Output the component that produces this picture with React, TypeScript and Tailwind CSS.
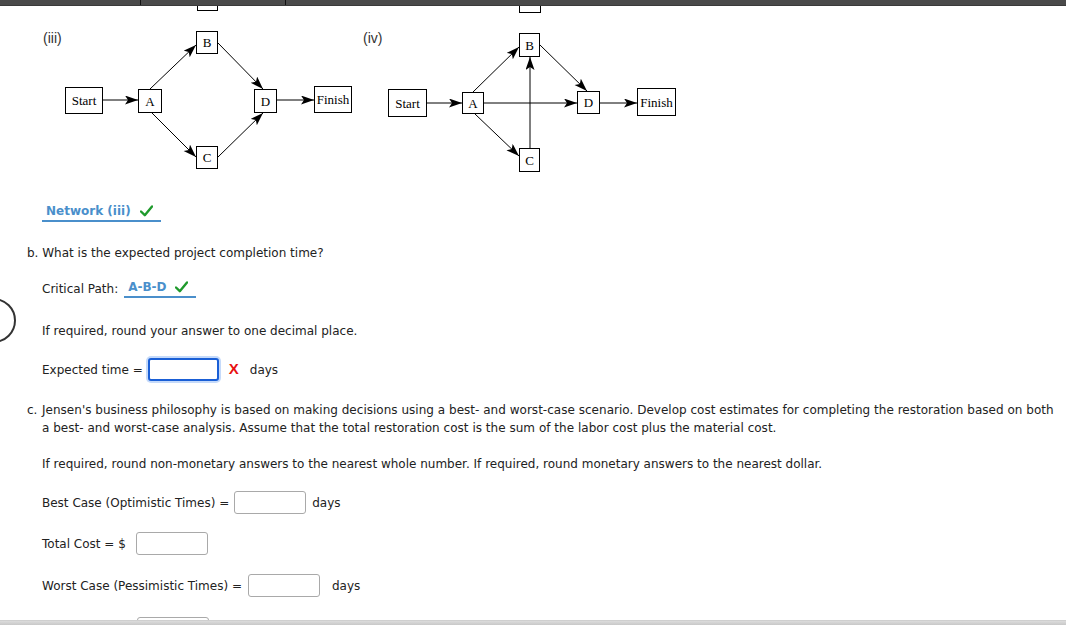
import React from "react";

const font = { fontFamily: '"DejaVu Sans", Verdana, sans-serif' };
const serif = { fontFamily: '"Liberation Serif", "Times New Roman", serif' };
const sans = { fontFamily: '"Liberation Sans", Arial, sans-serif' };

function Check() {
  return (
    <svg width="13" height="12" viewBox="0 0 13 12" className="inline-block">
      <path d="M1 6.5 L4.8 10.2 L12 1.5" fill="none" stroke="#1f9a2c" strokeWidth="2.4" strokeLinecap="round" strokeLinejoin="round" />
    </svg>
  );
}

function Box({ x1, y1, x2, y2, label }: { x1: number; y1: number; x2: number; y2: number; label?: string }) {
  return (
    <g>
      <rect x={x1 + 0.5} y={y1 + 0.5} width={x2 - x1 - 1} height={y2 - y1 - 1} fill="white" stroke="black" strokeWidth="1" />
      {label && (
        <text x={(x1 + x2) / 2} y={(y1 + y2) / 2 + 4.5} textAnchor="middle" fill="black" style={{ ...serif, fontSize: 13 }}>
          {label}
        </text>
      )}
    </g>
  );
}

function Arrow({ x1, y1, x2, y2, id }: { x1: number; y1: number; x2: number; y2: number; id: string }) {
  return <line x1={x1} y1={y1} x2={x2} y2={y2} stroke="black" strokeWidth="1" markerEnd={`url(#${id})`} />;
}

function Head({ id }: { id: string }) {
  return (
    <defs>
      <marker id={id} markerWidth="14" markerHeight="10" refX="13" refY="4.5" orient="auto" markerUnits="userSpaceOnUse">
        <path d="M0,0 L13,4.5 L0,9 L3,4.5 z" fill="black" />
      </marker>
    </defs>
  );
}

function NetworkThree() {
  return (
    <svg width="360" height="184" viewBox="0 6 360 184" className="block shrink-0">
      <Head id="h3" />
      <text x="43" y="43" fill="#333" style={{ ...sans, fontSize: 14 }}>(iii)</text>
      <Box x1={197} y1={-10} x2={218} y2={11} />
      <Arrow x1={103} y1={100} x2={138} y2={100} id="h3" />
      <Arrow x1={150} y1={89} x2={196} y2={45} id="h3" />
      <Arrow x1={218} y1={43} x2={263} y2={89} id="h3" />
      <Arrow x1={152} y1={113} x2={196} y2={157} id="h3" />
      <Arrow x1={218} y1={157} x2={263} y2={113} id="h3" />
      <Arrow x1={277} y1={100} x2={314} y2={100} id="h3" />
      <Box x1={65} y1={87} x2={103} y2={114} label="Start" />
      <Box x1={138} y1={89} x2={162} y2={113} label="A" />
      <Box x1={196} y1={31} x2={218} y2={54} label="B" />
      <Box x1={196} y1={146} x2={218} y2={169} label="C" />
      <Box x1={254} y1={89} x2={277} y2={113} label="D" />
      <Box x1={314} y1={86} x2={352} y2={113} label="Finish" />
    </svg>
  );
}

function NetworkFour() {
  return (
    <svg width="330" height="184" viewBox="360 6 330 184" className="block shrink-0">
      <Head id="h4" />
      <text x="363" y="43" fill="#333" style={{ ...sans, fontSize: 14 }}>(iv)</text>
      <Box x1={519} y1={-10} x2={541} y2={13} />
      <Arrow x1={427} y1={103} x2={462} y2={103} id="h4" />
      <Arrow x1={473} y1={92} x2={519} y2={47} id="h4" />
      <Arrow x1={540} y1={45} x2={587} y2={91} id="h4" />
      <Arrow x1={484} y1={103} x2={577} y2={103} id="h4" />
      <Arrow x1={475} y1={114} x2={519} y2={156} id="h4" />
      <Arrow x1={530} y1={148} x2={530} y2={57} id="h4" />
      <Arrow x1={600} y1={103} x2={637} y2={103} id="h4" />
      <Box x1={388} y1={89} x2={427} y2={117} label="Start" />
      <Box x1={462} y1={92} x2={484} y2={114} label="A" />
      <Box x1={519} y1={33} x2={540} y2={57} label="B" />
      <Box x1={519} y1={148} x2={540} y2={172} label="C" />
      <Box x1={577} y1={91} x2={600} y2={114} label="D" />
      <Box x1={637} y1={88} x2={676} y2={116} label="Finish" />
    </svg>
  );
}

function Field() {
  return <div className="w-[72px] h-[23px] border border-[#a9a9a9] rounded-[3px] bg-white shrink-0" />;
}

export default function App() {
  return (
    <div className="relative w-[1066px] h-[625px] overflow-hidden bg-white text-[12px] text-[#222]" style={font}>
      {/* top frame bar */}
      <div className="flex h-[6px] bg-[#4a4a4a] border-b border-[#3a3a3a]">
        <div className="w-[141px] border-r border-[#111]" />
        <div className="w-[145px] border-r border-[#111]" />
      </div>

      <div className="flex">
        <NetworkThree />
        <NetworkFour />
      </div>

      <div className="flex flex-col">
        <div className="ml-[42px] mt-[13px] self-start flex items-center gap-[9px] pl-[4px] pr-[8px] pb-[1px] border-b-2 border-[#4a8fcb] leading-[16px]">
          <span className="font-bold text-[#4a8fcb]">Network (iii)</span>
          <Check />
        </div>

        <div className="ml-[27px] mt-[23px] leading-[16px]">b. What is the expected project completion time?</div>

        <div className="ml-[42px] mt-[18px] flex items-center leading-[16px]">
          <span>Critical Path:</span>
          <div className="ml-[6px] flex items-center gap-[8px] pl-[4px] pr-[8px] pb-[1px] border-b-2 border-[#4a8fcb]">
            <span className="font-bold text-[#4a8fcb]">A-B-D</span>
            <Check />
          </div>
        </div>

        <div className="ml-[42px] mt-[25px] leading-[16px]">If required, round your answer to one decimal place.</div>

        <div className="ml-[42px] mt-[19px] flex items-center h-[23px]">
          <span>Expected time =</span>
          <div className="ml-[5px] w-[71px] h-[23px] rounded-[3px] border-2 border-[#1a5fd6] shadow-[0_0_0_2px_rgba(90,150,240,0.35)] bg-white" />
          <span className="ml-[10px] font-bold text-[15px] text-[#e81010]" style={sans}>X</span>
          <span className="ml-[11px]">days</span>
        </div>

        <div className="ml-[27px] mt-[20px] flex leading-[18px]">
          <span className="w-[15px] shrink-0">c.</span>
          <p className="whitespace-nowrap tracking-[0.02px]">
            Jensen's business philosophy is based on making decisions using a best- and worst-case scenario. Develop cost estimates for completing the restoration based on both
            <br />
            a best- and worst-case analysis. Assume that the total restoration cost is the sum of the labor cost plus the material cost.
          </p>
        </div>

        <div className="ml-[42px] mt-[19px] leading-[16px]">
          If required, round non-monetary answers to the nearest whole number. If required, round monetary answers to the nearest dollar.
        </div>

        <div className="ml-[42px] mt-[19px] flex items-center h-[23px]">
          <span>Best Case (Optimistic Times) =</span>
          <div className="ml-[5px]"><Field /></div>
          <span className="ml-[6px]">days</span>
        </div>

        <div className="ml-[42px] mt-[18px] flex items-center h-[23px]">
          <span>Total Cost = $</span>
          <div className="ml-[10px]"><Field /></div>
        </div>

        <div className="ml-[42px] mt-[19px] flex items-center h-[23px]">
          <span>Worst Case (Pessimistic Times) =</span>
          <div className="ml-[6px]"><Field /></div>
          <span className="ml-[12px]">days</span>
        </div>

        <div className="ml-[137px] mt-[20px]"><Field /></div>
      </div>

      {/* progress ring, cut off by the left edge */}
      <div className="absolute left-[-29px] top-[298px] w-[45px] h-[45px] rounded-full border-2 border-[#333]" />

      {/* bottom frame bar */}
      <div className="absolute left-0 right-0 bottom-0 h-[5px] bg-gradient-to-b from-[#dcdcdc] to-[#c8c8c8] border-t border-[#cfcfcf]" />
    </div>
  );
}
